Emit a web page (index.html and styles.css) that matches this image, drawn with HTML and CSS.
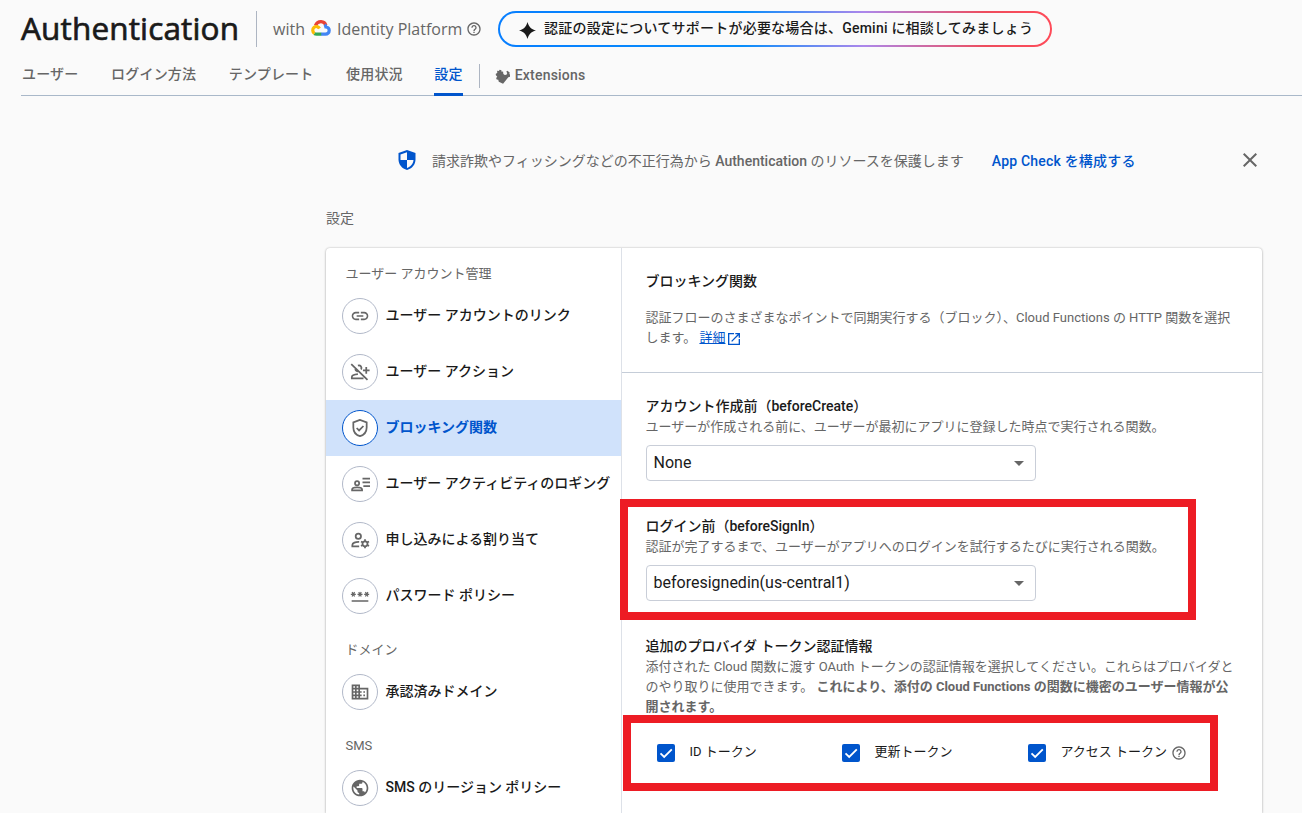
FILE: index.html
```html
<!DOCTYPE html>
<html lang="ja">
<head>
<meta charset="utf-8">
<title>Authentication</title>
<link rel="stylesheet" href="styles.css">
</head>
<body>
<svg class="defs" aria-hidden="true">
  <symbol id="help" viewBox="0 0 24 24"><path d="M11 18h2v-2h-2v2zm1-16C6.48 2 2 6.48 2 12s4.48 10 10 10 10-4.480 10-10S17.520 2 12 2zm0 18c-4.410 0-8-3.590-8-8s3.590-8 8-8 8 3.590 8 8-3.590 8-8 8zm0-14c-2.210 0-4 1.790-4 4h2c0-1.100.9-2 2-2s2 .9 2 2c0 2-3 1.750-3 5h2c0-2.250 3-2.500 3-5 0-2.210-1.790-4-4-4z"/></symbol>
  <symbol id="check" viewBox="0 0 18 18"><path d="M3.500 9.300l3.700 3.700 7.600-7.700" fill="none" stroke="#fff" stroke-width="1.800"/></symbol>
</svg>
<header class="header">
  <div class="title-row">
    <h1 class="title">Authentication</h1>
    <div class="platform">
      <span class="with">with</span>
      <svg class="cloud" viewBox="0 0 20 16">
        <path fill="none" stroke="#ea4335" stroke-width="3.200" d="M4.400 5.600C5.600 2.800 8 1.600 10.200 1.700c2.200.1 4 1.500 4.700 3.800"/>
        <path fill="none" stroke="#4285f4" stroke-width="3.200" d="M13.600 4.600c1 .9 1.100 1.600 1.300 2.400 1.900.1 3.300 1.500 3.300 3.500s-1.500 3.700-3.700 3.700H10"/>
        <path fill="none" stroke="#34a853" stroke-width="3.200" d="M10.200 14.200H5.600c-.9 0-1.600-.2-2.300-.6"/>
        <path fill="none" stroke="#fbbc04" stroke-width="3.200" d="M3.400 13.500C1.300 12 1.200 8.800 3.100 7.300c2-1.500 4.300-.8 5.400 1.200"/>
      </svg>
      <span class="identity">Identity Platform</span>
      <svg class="help-icon"><use href="#help"/></svg>
    </div>
    <div class="gemini">
      <svg class="spark" viewBox="0 0 16 16"><path d="M8 0c1.100 4.200 3.300 6.700 8 8-4.700 1.300-6.900 3.800-8 8-1.100-4.200-3.300-6.700-8-8 4.700-1.300 6.900-3.800 8-8z"/></svg>
      <span>認証の設定についてサポートが必要な場合は、Gemini に相談してみましょう</span>
    </div>
  </div>
  <nav class="tabs">
    <span class="tab">ユーザー</span>
    <span class="tab">ログイン方法</span>
    <span class="tab">テンプレート</span>
    <span class="tab">使用状況</span>
    <span class="tab active">設定</span>
    <span class="extensions">
      <svg class="ext-icon" viewBox="0 0 16 16"><path d="M2.300 1.800 4 2.200 5 .8l1.800.6.2 1.500 1.600-.2.300 2.500 1.500 1.300 1.800-.5.800-1.600-.9-1.700 1-.9 2.600 1.800-.4 1.800 1.200 1-.3 1.700-2 .8L8.600 15.600 4 13.500l-.5-2-1.700-.3-.6-1.600 1.200-1.300L.8 6.500.9 5l1.500-.8z"/></svg>
      <span>Extensions</span>
    </span>
  </nav>
</header>
<main class="main">
  <div class="notice">
    <svg class="shield" viewBox="0 0 18 20"><path d="M9 0 .5 3v6.500C.5 14.500 4 18.600 9 20c5-1.400 8.500-5.500 8.500-10.500V3z"/><path fill="#fafafa" d="M9 2.200v7.700H2.500V4.500zM9 9.900h6.500c-.3 3.800-3 6.900-6.500 8z"/></svg>
    <span class="notice-text">請求詐欺やフィッシングなどの不正行為から <span class="product">Authentication</span> のリソースを保護します</span>
    <a class="notice-link">App Check を構成する</a>
    <svg class="close" viewBox="0 0 24 24"><path d="M19 6.410L17.590 5 12 10.590 6.410 5 5 6.410 10.590 12 5 17.590 6.410 19 12 13.410 17.590 19 19 17.590 13.410 12z"/></svg>
  </div>
  <h2 class="section-title">設定</h2>
  <div class="card">
    <aside class="side">
      <div class="group">ユーザー アカウント管理</div>
      <div class="item"><i class="round"><svg viewBox="0 0 24 24"><path d="M3.900 12c0-1.710 1.390-3.100 3.100-3.100h4V7H7c-2.760 0-5 2.240-5 5s2.240 5 5 5h4v-1.900H7c-1.710 0-3.100-1.390-3.100-3.100zM8 13h8v-2H8v2zm9-6h-4v1.900h4c1.710 0 3.100 1.390 3.100 3.100s-1.390 3.100-3.100 3.100h-4V17h4c2.760 0 5-2.240 5-5s-2.240-5-5-5z"/></svg></i><span>ユーザー アカウントのリンク</span></div>
      <div class="item"><i class="round"><svg class="line" viewBox="0 0 24 24"><path d="M1.500 2.500l19.500 19M9.500 4.300c3-.9 5.300 1.800 3.800 4.700M6.200 8.500c.3 1.700 1.300 2.700 3 3M9.500 14.500c-4 .3-7.300 1.700-7.300 3.500v1.500h14M19.500 6v8M15.500 10h8"/></svg></i><span>ユーザー アクション</span></div>
      <div class="item selected"><i class="round"><svg class="line" viewBox="0 0 24 24"><path d="M12 2.200 4 5.300v6c0 5 3.300 9 8 10.500 4.700-1.500 8-5.500 8-10.500v-6zM8 12l2.900 2.900 5.200-5.300"/></svg></i><span>ブロッキング関数</span></div>
      <div class="item"><i class="round"><svg class="line" viewBox="0 0 24 24"><circle cx="8.500" cy="11" r="2.500"/><path d="M2.500 19.500v-1c0-1.800 3-2.600 6-2.600s6 .8 6 2.600v1zM15 5.500h9M15 10h9M16 14.500h8"/></svg></i><span>ユーザー アクティビティのロギング</span></div>
      <div class="item"><i class="round"><svg class="line" viewBox="0 0 24 24"><circle cx="10" cy="7.500" r="3.200"/><path d="M11 14.200c-4.500-.2-8.200 1.500-8.200 3.800v1.500H11"/><circle cx="18" cy="16.500" r="3"/><path d="M18 11v2.500M18 19.500V22M13.200 13.700l2.200 1.300M20.600 18l2.200 1.300M13.200 19.300l2.200-1.300M20.600 15l2.200-1.300"/></svg></i><span>申し込みによる割り当て</span></div>
      <div class="item"><i class="round"><svg viewBox="0 0 24 24"><path d="M2 17h20v2H2v-2zm1.150-4.050L4 11.470l.85 1.480 1.300-.75-.85-1.480H7v-1.500H5.300l.85-1.470L4.850 7 4 8.470 3.150 7l-1.300.75.850 1.470H1v1.500h1.700l-.85 1.480 1.300.75zm6.700-.75l1.300.75.85-1.480.85 1.480 1.300-.75-.85-1.480H15v-1.500h-1.700l.85-1.470-1.300-.75L12 8.470 11.150 7l-1.300.75.850 1.470H9v1.500h1.700l-.85 1.480zM23 9.220h-1.700l.85-1.470-1.300-.75L20 8.470 19.150 7l-1.300.75.850 1.470H17v1.500h1.700l-.85 1.480 1.300.75.85-1.480.85 1.480 1.300-.75-.85-1.480H23v-1.500z"/></svg></i><span>パスワード ポリシー</span></div>
      <div class="group">ドメイン</div>
      <div class="item"><i class="round"><svg viewBox="0 0 24 24"><path d="M12 7V3H2v18h20V7H12zM6 19H4v-2h2v2zm0-4H4v-2h2v2zm0-4H4V9h2v2zm0-4H4V5h2v2zm4 12H8v-2h2v2zm0-4H8v-2h2v2zm0-4H8V9h2v2zm0-4H8V5h2v2zm10 12h-8v-2h2v-2h-2v-2h2v-2h-2V9h8v10zm-2-8h-2v2h2v-2zm0 4h-2v2h2v-2z"/></svg></i><span>承認済みドメイン</span></div>
      <div class="group">SMS</div>
      <div class="item"><i class="round"><svg viewBox="0 0 24 24"><path d="M12 2C6.480 2 2 6.480 2 12s4.480 10 10 10 10-4.480 10-10S17.520 2 12 2zm-1 17.930c-3.950-.49-7-3.850-7-7.930 0-.62.08-1.210.21-1.790L9 15v1c0 1.100.9 2 2 2v1.930zm6.900-2.540c-.26-.81-1-1.390-1.900-1.390h-1v-3c0-.55-.45-1-1-1H8v-2h2c.55 0 1-.45 1-1V7h2c1.100 0 2-.9 2-2v-.41c2.930 1.190 5 4.060 5 7.410 0 2.080-.8 3.970-2.100 5.390z"/></svg></i><span>SMS のリージョン ポリシー</span></div>
    </aside>
    <section class="content">
      <div class="intro">
        <h3 class="heading">ブロッキング関数</h3>
        <p class="desc intro-desc">認証フローのさまざまなポイントで同期実行する（ブロック）、Cloud Functions の HTTP 関数を選択<br>します。 <a class="more">詳細</a><svg class="open" viewBox="0 0 24 24"><path d="M19 19H5V5h7V3H3v18h18v-9h-2v7zM14 3v2h3.590l-9.830 9.830 1.410 1.410L19 6.410V10h2V3h-7z"/></svg></p>
      </div>
      <div class="fields">
        <div class="field">
          <h3 class="heading">アカウント作成前（beforeCreate）</h3>
          <p class="desc">ユーザーが作成される前に、ユーザーが最初にアプリに登録した時点で実行される関数。</p>
          <div class="select"><span>None</span><i class="arrow"></i></div>
        </div>
        <div class="field">
          <h3 class="heading">ログイン前（beforeSignIn）</h3>
          <p class="desc">認証が完了するまで、ユーザーがアプリへのログインを試行するたびに実行される関数。</p>
          <div class="select"><span>beforesignedin(us-central1)</span><i class="arrow"></i></div>
        </div>
        <div class="field">
          <h3 class="heading">追加のプロバイダ トークン認証情報</h3>
          <p class="desc">添付された Cloud 関数に渡す OAuth トークンの認証情報を選択してください。これらはプロバイダと<br>のやり取りに使用できます。 <b>これにより、添付の Cloud Functions の関数に機密のユーザー情報が公<br>開されます。</b></p>
          <div class="checks">
            <label class="option"><svg class="box"><use href="#check"/></svg><span>ID トークン</span></label>
            <label class="option"><svg class="box"><use href="#check"/></svg><span>更新トークン</span></label>
            <label class="option"><svg class="box"><use href="#check"/></svg><span>アクセス トークン</span><svg class="help-icon"><use href="#help"/></svg></label>
          </div>
        </div>
      </div>
    </section>
  </div>
</main>
<div class="mark mark-signin"></div>
<div class="mark mark-tokens"></div>
</body>
</html>
```
FILE: styles.css
```css
* { box-sizing: border-box; }
body {
  margin: 0;
  width: 1302px;
  height: 813px;
  overflow: hidden;
  position: relative;
  background: #fafafa;
  color: #1a1a1a;
  font: 14px/20px Roboto, "Noto Sans CJK JP", sans-serif;
}
h1, h2, h3, p { margin: 0; }
svg { fill: #666; flex: none; }
.defs { display: none; }
.header { padding-left: 21px; }
.title-row { display: flex; height: 58px; padding-top: 11px; white-space: nowrap; }
.title {
  width: 236px;
  height: 36px;
  border-right: 1px solid #adb5c2;
  font: 400 31.500px/34px "Open Sans", "Noto Sans", sans-serif;
  letter-spacing: .15px;
  -webkit-text-stroke: .7px #1a1a1a;
}
.platform {
  display: flex;
  align-items: center;
  width: 241px;
  height: 36px;
  padding-left: 16px;
  color: #666;
  font: 16px/36px "Open Sans", sans-serif;
}
.platform span { margin-top: -1px; }
.with { width: 38px; }
.cloud { width: 20px; height: 16px; margin: -2px 6px 0 0; }
.identity { width: 129px; }
.help-icon { width: 16px; height: 16px; }
.gemini {
  display: flex;
  align-items: center;
  width: 554px;
  height: 36px;
  padding-left: 19px;
  border: 2px solid transparent;
  border-radius: 18px;
  background: linear-gradient(#fafafa, #fafafa) padding-box, linear-gradient(90deg, #077eff 0%, #078efb 44%, #ac87eb 66%, #ee4d5d 88%, #ff4a58 100%) border-box;
  font-weight: 500;
  letter-spacing: .22px;
}
.gemini span { margin-top: -2px; }
.spark { width: 17px; height: 17px; margin: 2px 8px 0 0; fill: #1a1a1a; }
.tabs {
  display: flex;
  height: 38px;
  border-bottom: 1px solid #a9b8c9;
  color: #666;
  font-weight: 500;
  letter-spacing: .2px;
}
.tab { height: 38px; margin-right: 30.500px; padding: 6px 1px 0; }
.tab.active { margin-right: 16px; padding: 6px 0 0; border-bottom: 3px solid #05c; color: #05c; }
.extensions { display: flex; align-items: center; height: 24px; margin-top: 6px; padding-left: 15px; border-left: 1px solid #adb5c2; }
.extensions span { margin-top: -2px; }
.ext-icon { width: 15px; height: 15px; margin-right: 5px; }
.main { width: 936px; margin-left: 326px; }
.notice { display: flex; align-items: center; height: 40px; margin-top: 44px; padding: 0 0 0 72px; color: #666; }
.notice span, .notice-link { margin-top: 1px; }
.shield { width: 18px; height: 20px; margin-right: 16px; fill: #05c; }
.product { font-weight: 500; }
.notice-link { margin-left: 28px; color: #05c; font-weight: 500; letter-spacing: .2px; }
.close { width: 24px; height: 24px; margin-left: auto; }
.section-title { margin-top: 28px; color: #666; font-size: 14px; font-weight: 400; line-height: 20px; }
.card { display: flex; height: 565px; margin-top: 20px; border-radius: 4px 4px 0 0; background: #fff; box-shadow: 0 0 2px rgba(0,0,0,.25), 0 1px 3px rgba(0,0,0,.18); }
.side { width: 296px; overflow: hidden; border-right: 1px solid #dde1e8; }
.group { height: 40px; padding: 16px 0 0 19.500px; color: #666; font-size: 13px; line-height: 20px; }
.item { display: flex; align-items: center; height: 56px; padding-left: 16px; font-weight: 500; white-space: nowrap; }
.item span { margin: -3px 0 0 7.500px; }
.round { display: grid; place-items: center; width: 36px; height: 36px; flex: none; border: 1px solid #b2b9c9; border-radius: 50%; background: #fff; }
.round svg { width: 20px; height: 20px; }
.line { fill: none; stroke: #666; stroke-width: 2.100; }
.selected { background: #d0e2fb; color: #05c; font-weight: 700; }
.selected .round { border-color: #05c; }
.content { flex: 1; white-space: nowrap; }
.intro { height: 125px; padding: 23px 23.500px 0; border-bottom: 1px solid #c5cdd8; }
.heading { font-size: 14px; font-weight: 500; line-height: 20px; }
.desc { color: #666; font-size: 13px; line-height: 20px; }
.intro-desc { margin-top: 17px; }
.more { color: #05c; text-decoration: underline; }
.open { width: 16px; height: 16px; margin-left: 1px; vertical-align: -5px; fill: #05c; }
.fields { padding: 23px 24px 0; }
.field { height: 120px; }
.fields .heading { height: 21px; }
.fields .heading, .fields .desc { margin-left: -.5px; }
.select { display: flex; align-items: center; justify-content: space-between; width: 390px; height: 36px; margin-top: 8px; padding: 0 11px 0 6.500px; border: 1px solid #c9ced8; border-radius: 4px; font-size: 16px; }
.arrow { border: 5px solid transparent; border-top-color: #666; border-bottom: 0; }
.checks { display: grid; grid-template-columns: 185px 186px auto; margin-top: 26px; padding-left: 11px; font-size: 13px; }
.option { display: flex; align-items: center; }
.option span { margin-top: -1px; }
.box { width: 18px; height: 18px; margin-right: 14.500px; border-radius: 2px; background: #05c; }
.option .help-icon { margin-left: 4px; }
.mark { position: absolute; border: 8px solid #ed1c24; }
.mark-signin { left: 620px; top: 499px; width: 576px; height: 121px; }
.mark-tokens { left: 623px; top: 715px; width: 595px; height: 76px; }
```
